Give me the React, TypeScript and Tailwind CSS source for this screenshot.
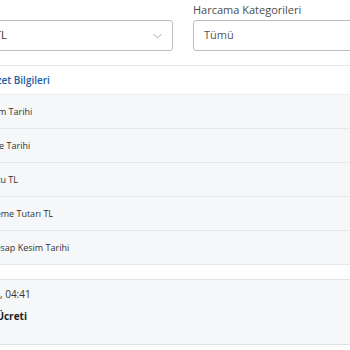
const rows = [
  { label: 'Hesap Kesim Tarihi', pad: 'pl-[14px]' },
  { label: 'Son Ödeme Tarihi', pad: 'pl-[17px]' },
  { label: 'Ekstre Borcu TL', pad: 'pl-[15px]' },
  { label: 'Asgari Ödeme Tutarı TL', pad: 'pl-[17px]' },
  { label: 'Sonraki Hesap Kesim Tarihi', pad: 'pl-[17px]' },
]

function ChevronDown() {
  return (
    <svg width="9" height="6" viewBox="0 0 9 6" fill="none">
      <path d="M0.5 1 L4.5 5 L8.5 1" stroke="#9aabbd" strokeWidth="1" />
    </svg>
  )
}

function Filters() {
  return (
    <div className="-ml-[16px] flex items-end gap-5 pt-[2px]">
      <div className="flex h-[31px] w-[189px] shrink-0 items-center justify-between rounded-[3px] border border-[#b9bec5] pl-[10px] pr-[10px] text-[11px] text-[#333]">
        <span>TL</span>
        <ChevronDown />
      </div>
      <div className="w-[220px] shrink-0">
        <div className="mb-[3px] text-[11px] leading-[15px] text-[#4d4d4d]">Harcama Kategorileri</div>
        <div className="flex h-[31px] items-center rounded-[3px] border border-[#b9bec5] pl-[10px] text-[11px] text-[#555]">
          Tümü
        </div>
      </div>
    </div>
  )
}

export default function App() {
  return (
    <div className="h-[350px] w-[350px] overflow-hidden bg-white font-['Open_Sans',sans-serif]">
      <Filters />

      <div className="mt-[14px] -ml-[62px] border-t border-[#e4e6e9]">
        <div className="flex h-[28px] items-center pl-[18px] text-[10px] font-semibold text-[#1c5ba0]">
          Hesap Özet Bilgileri
        </div>

        <div className="border-t border-[#eef0f2] bg-[#f6f7f9]">
          {rows.map((row) => (
            <div
              key={row.label}
              className={`flex h-[34px] items-center border-b border-[#e6e8eb] text-[9px] text-[#333] ${row.pad}`}
            >
              {row.label}
            </div>
          ))}
        </div>

        <div className="mt-[14px] flex h-[66px] flex-col gap-[8px] border-y border-[#e1e3e6] bg-[#f6f7f9] pl-[11px] pt-[7px] text-[10px] leading-[14px] text-[#333]">
          <div>15.06.2024, 04:41</div>
          <div className="-ml-[4px] font-bold text-[#222]">Yıllık Kart Ücreti</div>
        </div>
      </div>
    </div>
  )
}
